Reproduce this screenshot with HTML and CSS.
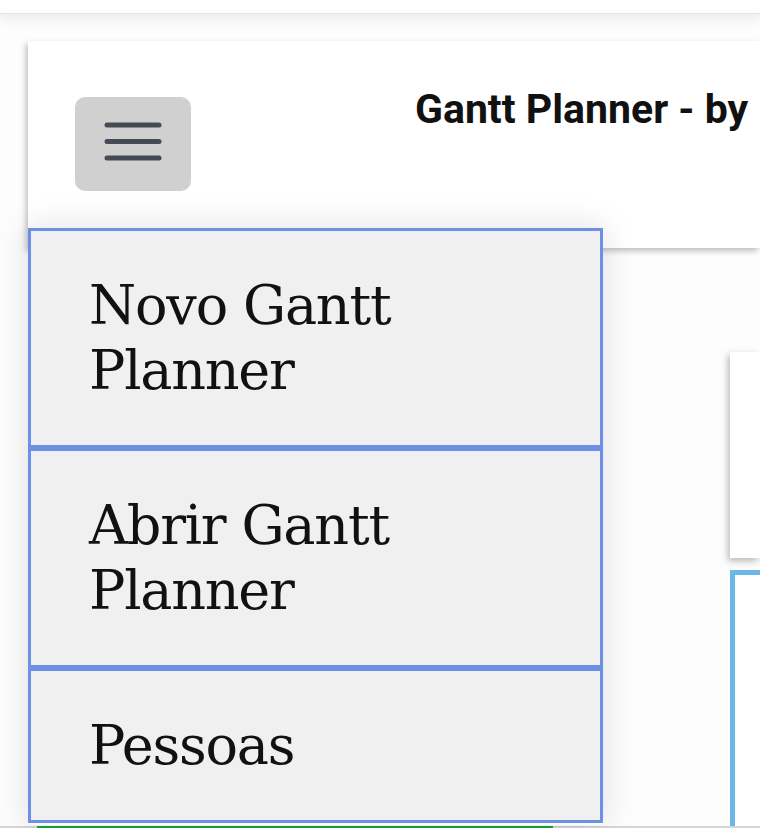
FILE: index.html
```html
<!DOCTYPE html>
<html lang="pt">
<head>
<meta charset="utf-8">
<title>Gantt Planner</title>
<link rel="stylesheet" href="styles.css">
</head>
<body>
<div class="topbar"></div>
<div class="page">
  <header class="header">
    <button class="burger" aria-label="Menu">
      <svg width="58" height="40" viewBox="0 0 58 40">
        <g stroke="#454b55" stroke-width="5" stroke-linecap="round">
          <line x1="3" y1="4" x2="55" y2="4"/>
          <line x1="3" y1="20.5" x2="55" y2="20.5"/>
          <line x1="3" y1="37" x2="55" y2="37"/>
        </g>
      </svg>
    </button>
    <h1 class="title">Gantt Planner - by</h1>
  </header>
  <main class="content">
    <div class="spacer"></div>
    <div class="side">
      <div class="card"></div>
      <div class="panel"></div>
    </div>
  </main>
</div>
<nav class="menu">
  <a class="menu-item">Novo Gantt Planner</a>
  <a class="menu-item">Abrir Gantt Planner</a>
  <a class="menu-item">Pessoas</a>
</nav>
<div class="bottombar"><span class="green"></span></div>
</body>
</html>
```
FILE: styles.css
```css
html, body {
  margin: 0;
  padding: 0;
  width: 760px;
  height: 828px;
  overflow: hidden;
  background: #fdfdfd;
}
body {
  position: relative;
  font-family: Roboto, "Liberation Sans", sans-serif;
}
.topbar {
  height: 13px;
  background: #ffffff;
  border-bottom: 1px solid #e4e4e4;
  box-shadow: 0 3px 16px rgba(0, 0, 0, 0.10);
  position: relative;
  z-index: 2;
}
.page {
  padding: 27px 0 0 28px;
  width: 732px;
  height: 787px;
  overflow: hidden;
}
.header {
  height: 207px;
  background: #ffffff;
  box-shadow: -2px 3px 6px rgba(0, 0, 0, 0.25);
  display: flex;
  align-items: flex-start;
}
.burger {
  margin: 56px 0 0 47px;
  width: 116px;
  height: 94px;
  border: none;
  border-radius: 10px;
  background: #d0d0d0;
  display: flex;
  align-items: center;
  justify-content: center;
  padding: 0;
  flex: none;
}
.burger svg {
  display: block;
  margin-top: -7px;
}
.title {
  margin: 44px 0 0 224px;
  font-family: Roboto, "Liberation Sans", sans-serif;
  font-weight: 700;
  font-size: 41px;
  line-height: 48px;
  color: #111111;
  white-space: nowrap;
}
.content {
  display: flex;
  margin-top: 104px;
}
.spacer {
  width: 702px;
  flex: none;
}
.side {
  display: flex;
  flex-direction: column;
  gap: 12px;
  width: 30px;
  flex: none;
}
.card {
  height: 206px;
  background: #ffffff;
  box-shadow: -2px 3px 7px rgba(0, 0, 0, 0.28);
}
.panel {
  height: 400px;
  background: #ffffff;
  border: 5px solid #6bb8e8;
  border-right: none;
}
.menu {
  position: absolute;
  left: 28px;
  top: 228px;
  width: 575px;
  height: 597px;
  overflow: hidden;
  display: flex;
  flex-direction: column;
  box-shadow: 0 0 32px rgba(0, 0, 0, 0.13);
  z-index: 3;
}
.menu-item {
  display: block;
  flex: none;
  background: #f0f0f0;
  border: 3px solid #6e8fe6;
  padding: 42px 40px 42px 58px;
  font-family: "DejaVu Serif", "Liberation Serif", serif;
  font-size: 54px;
  line-height: 65px;
  color: #111111;
  letter-spacing: -1.2px;
}
.bottombar {
  position: absolute;
  left: 0;
  top: 826px;
  width: 760px;
  height: 2px;
  background: #d6d6d6;
  z-index: 1;
}
.green {
  display: block;
  margin-left: 37px;
  width: 516px;
  height: 2px;
  background: #1aa23a;
}
```
